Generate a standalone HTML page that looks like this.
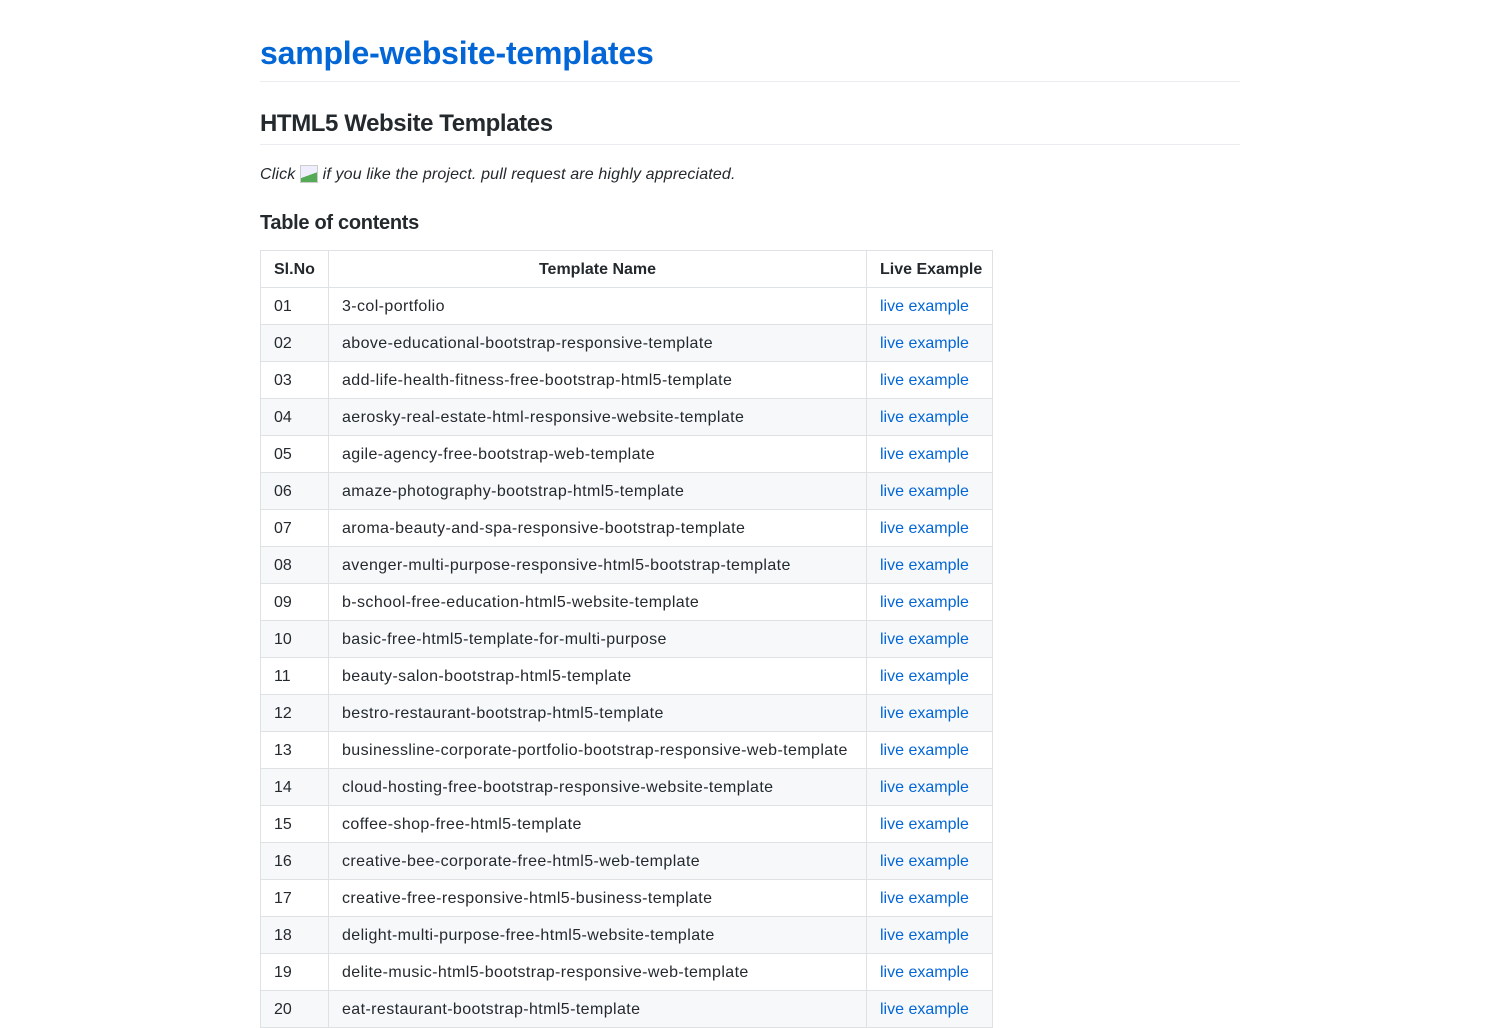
<!DOCTYPE html>
<html><head><meta charset="utf-8"><style>
html,body{height:1000px;overflow:hidden}
body{margin:0;background:#fff;font-family:"Liberation Sans",Arial,sans-serif;color:#24292e;font-size:16px;line-height:1.5}
.c{position:absolute;left:260px;width:980px;top:0}
h1{position:absolute;top:33px;left:0;margin:0;font-size:32px;line-height:40px;font-weight:bold;color:#0366d6;letter-spacing:-0.2px}
.hr1{position:absolute;top:81px;left:0;width:980px;height:1px;background:#eaecef}
h2{position:absolute;top:108px;left:0;margin:0;font-size:24px;line-height:32px;font-weight:bold;letter-spacing:-0.4px}
.hr2{position:absolute;top:144px;left:0;width:980px;height:1px;background:#eaecef}
p{position:absolute;top:163px;left:0;margin:0;font-style:italic;line-height:24px;white-space:nowrap;letter-spacing:0.15px}
.img{display:inline-block;width:16px;height:16px;border:1px solid #ccc;vertical-align:-4px;background:linear-gradient(160deg,#eef 55%,#5a5 56%)}
h3{position:absolute;top:210px;left:0;margin:0;font-size:20px;line-height:26px;font-weight:bold;letter-spacing:-0.3px}
table{position:absolute;top:250px;left:0;border-collapse:collapse;table-layout:fixed;width:732px}
td,th{border:1px solid #dfe2e5;height:37px;padding:2px 13px 0;white-space:nowrap;overflow:hidden;box-sizing:border-box}
td:nth-child(2){letter-spacing:0.4px}
th{font-weight:bold;text-align:center}
th:first-child,th:last-child{text-align:left}
tr:nth-child(odd) td{background:#f6f8fa}
a{color:#0366d6;text-decoration:none}
</style></head><body><div class="c">
<h1>sample-website-templates</h1><div class="hr1"></div>
<h2>HTML5 Website Templates</h2><div class="hr2"></div>
<p>Click <span class="img"></span> if you like the project. pull request are highly appreciated.</p>
<h3>Table of contents</h3>
<table><colgroup><col style="width:68px"><col style="width:538px"><col style="width:126px"></colgroup>
<tr><th>Sl.No</th><th>Template Name</th><th>Live Example</th></tr>
<tr><td>01</td><td>3-col-portfolio</td><td><a>live example</a></td></tr>
<tr><td>02</td><td>above-educational-bootstrap-responsive-template</td><td><a>live example</a></td></tr>
<tr><td>03</td><td>add-life-health-fitness-free-bootstrap-html5-template</td><td><a>live example</a></td></tr>
<tr><td>04</td><td>aerosky-real-estate-html-responsive-website-template</td><td><a>live example</a></td></tr>
<tr><td>05</td><td>agile-agency-free-bootstrap-web-template</td><td><a>live example</a></td></tr>
<tr><td>06</td><td>amaze-photography-bootstrap-html5-template</td><td><a>live example</a></td></tr>
<tr><td>07</td><td>aroma-beauty-and-spa-responsive-bootstrap-template</td><td><a>live example</a></td></tr>
<tr><td>08</td><td>avenger-multi-purpose-responsive-html5-bootstrap-template</td><td><a>live example</a></td></tr>
<tr><td>09</td><td>b-school-free-education-html5-website-template</td><td><a>live example</a></td></tr>
<tr><td>10</td><td>basic-free-html5-template-for-multi-purpose</td><td><a>live example</a></td></tr>
<tr><td>11</td><td>beauty-salon-bootstrap-html5-template</td><td><a>live example</a></td></tr>
<tr><td>12</td><td>bestro-restaurant-bootstrap-html5-template</td><td><a>live example</a></td></tr>
<tr><td>13</td><td>businessline-corporate-portfolio-bootstrap-responsive-web-template</td><td><a>live example</a></td></tr>
<tr><td>14</td><td>cloud-hosting-free-bootstrap-responsive-website-template</td><td><a>live example</a></td></tr>
<tr><td>15</td><td>coffee-shop-free-html5-template</td><td><a>live example</a></td></tr>
<tr><td>16</td><td>creative-bee-corporate-free-html5-web-template</td><td><a>live example</a></td></tr>
<tr><td>17</td><td>creative-free-responsive-html5-business-template</td><td><a>live example</a></td></tr>
<tr><td>18</td><td>delight-multi-purpose-free-html5-website-template</td><td><a>live example</a></td></tr>
<tr><td>19</td><td>delite-music-html5-bootstrap-responsive-web-template</td><td><a>live example</a></td></tr>
<tr><td>20</td><td>eat-restaurant-bootstrap-html5-template</td><td><a>live example</a></td></tr>
</table></div></body></html>
